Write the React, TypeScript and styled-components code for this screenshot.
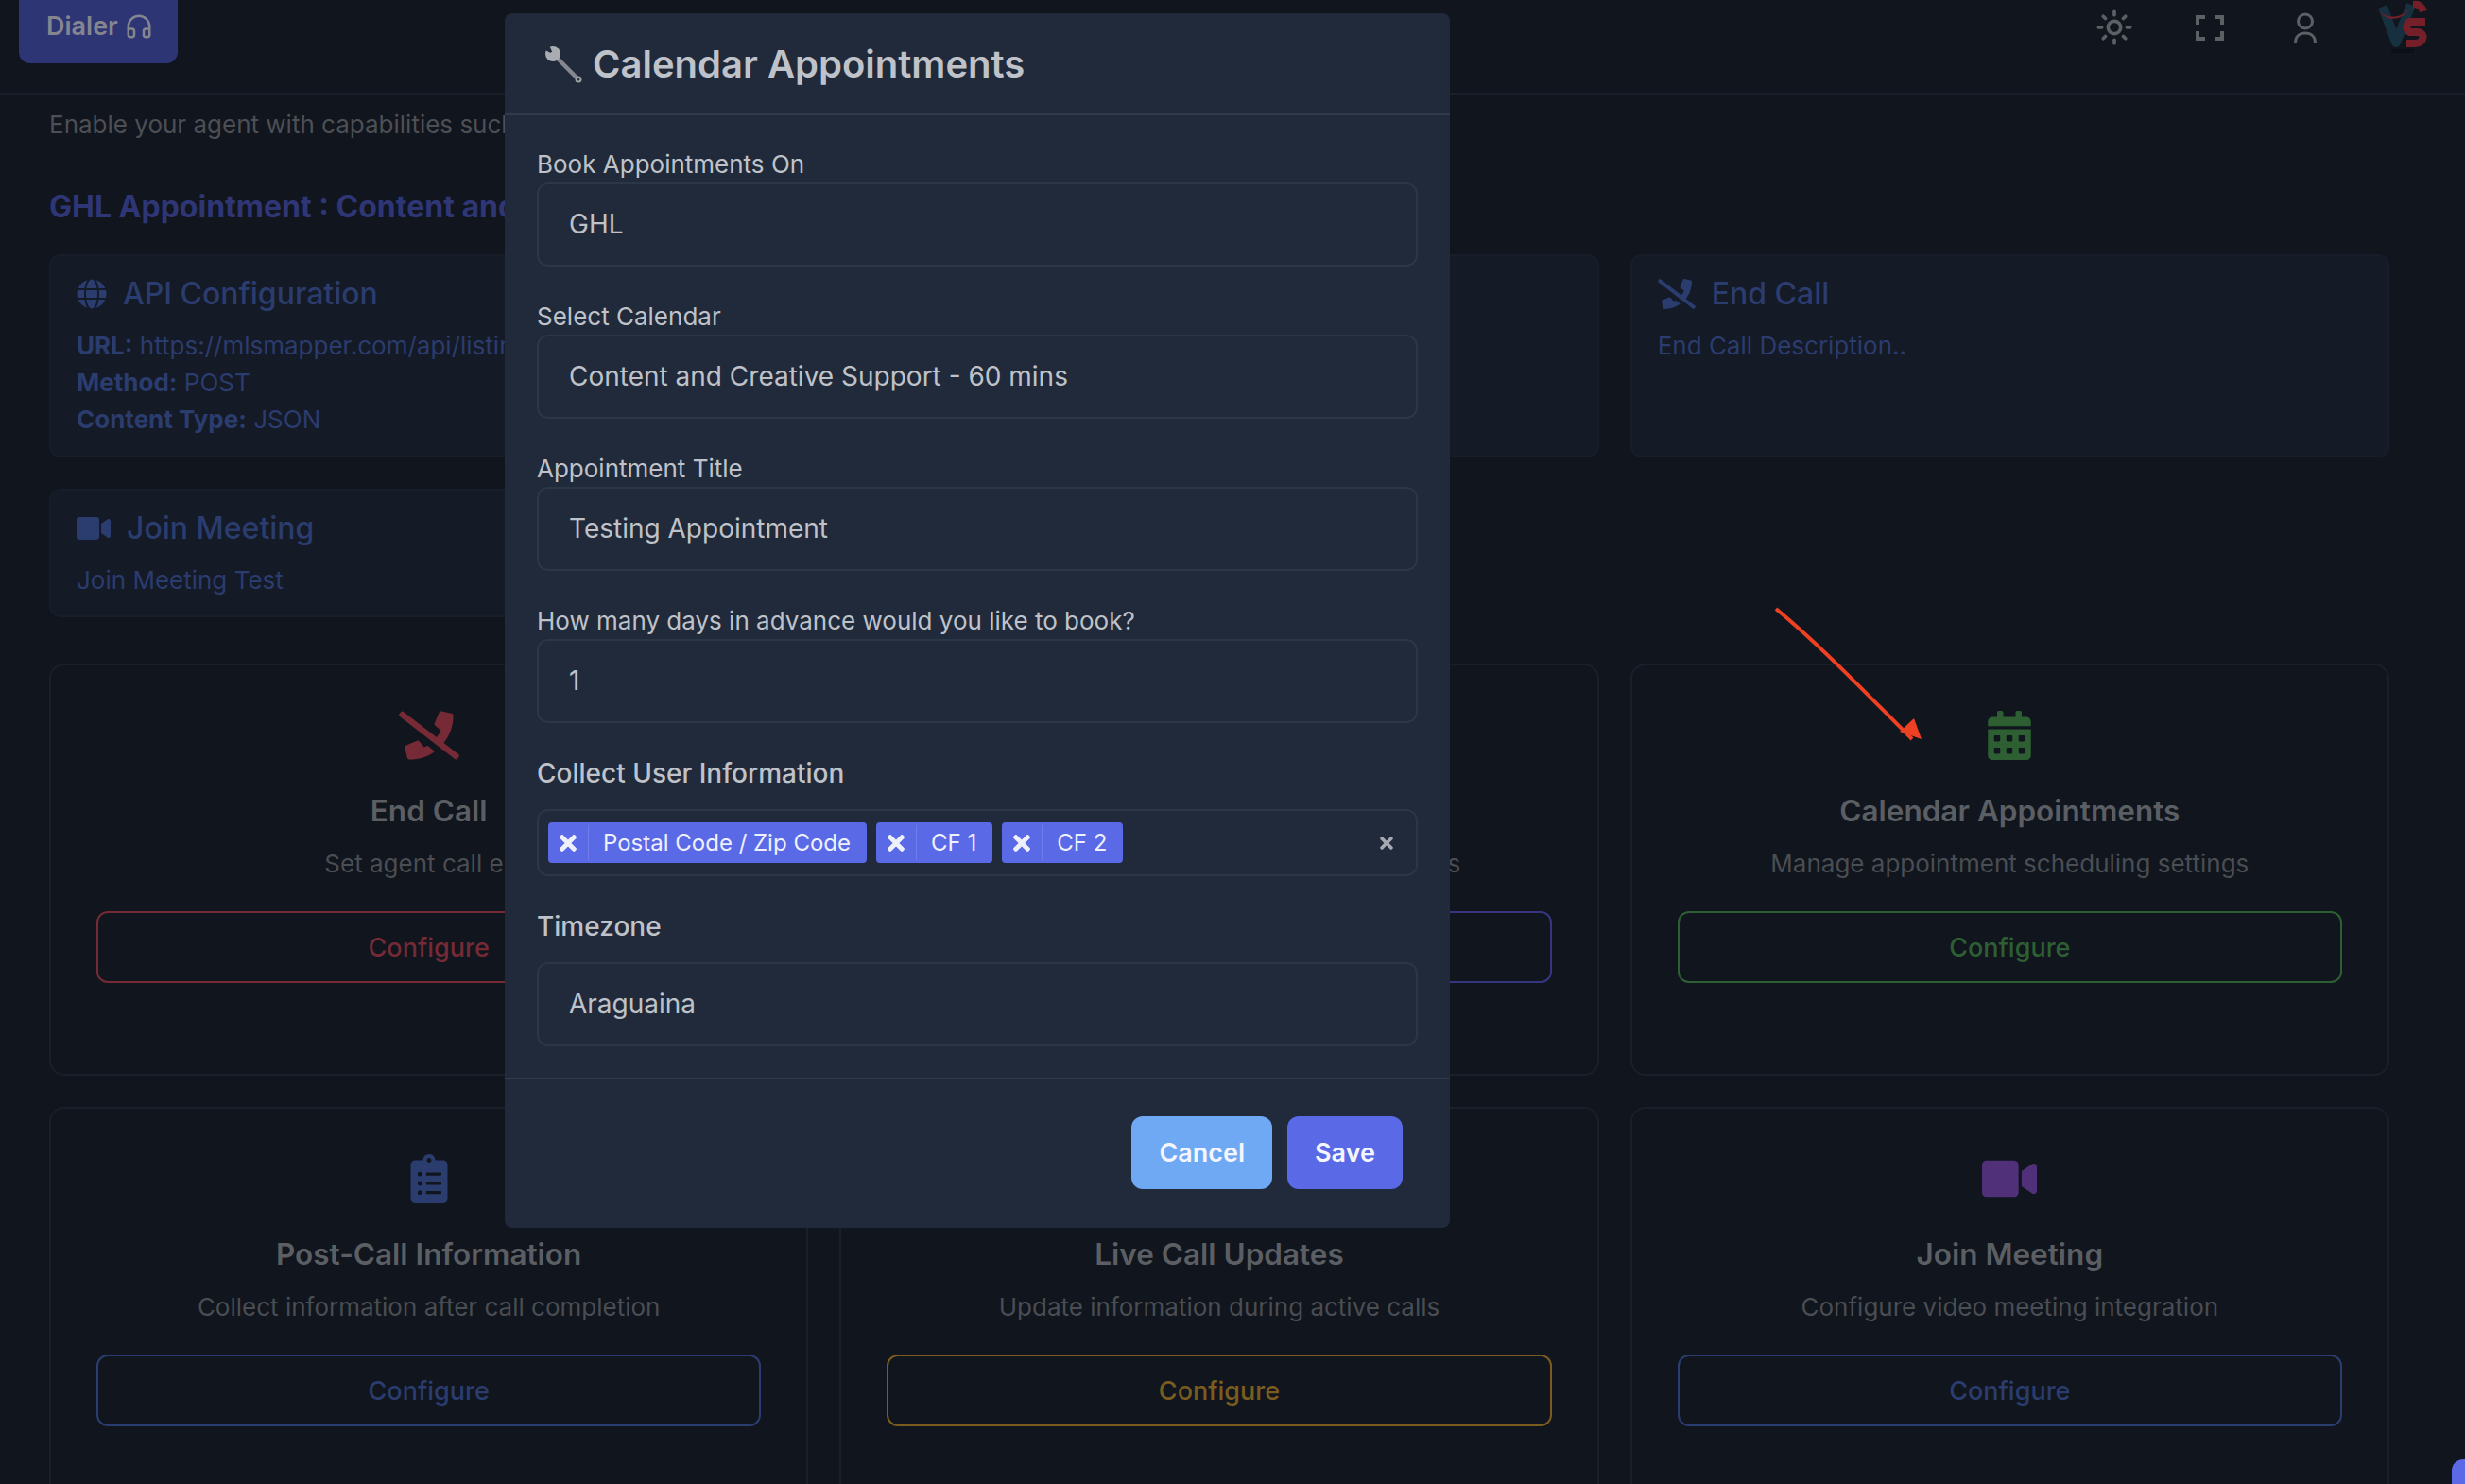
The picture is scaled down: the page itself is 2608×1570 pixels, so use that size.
import React from "react";
import styled, { createGlobalStyle } from "styled-components";
import { Headphones, Sun } from "lucide-react";
import {
  FaCalendarAlt,
  FaClipboardList,
  FaCode,
  FaGlobe,
  FaPhoneSlash,
  FaSyncAlt,
  FaTimes,
  FaVideo,
} from "react-icons/fa";

const GlobalStyle = createGlobalStyle`
  html, body {
    margin: 0;
    height: 100%;
    overflow: hidden;
    background: #10151e;
    font-family: Inter, "Noto Sans", sans-serif;
  }
`;

const tools = [
  {
    key: "end",
    icon: <FaPhoneSlash size={64} />,
    title: "End Call",
    desc: "Set agent call end",
    accent: "#752a35",
  },
  {
    key: "api",
    icon: <FaCode size={64} />,
    title: "API Tools",
    desc: "Configure custom API tools and functions",
    accent: "#35367f",
  },
  {
    key: "calendar",
    icon: <FaCalendarAlt size={52} />,
    title: "Calendar Appointments",
    desc: "Manage appointment scheduling settings",
    accent: "#2e5f33",
  },
  {
    key: "post",
    icon: <FaClipboardList size={52} />,
    title: "Post-Call Information",
    desc: "Collect information after call completion",
    accent: "#2a3d6e",
  },
  {
    key: "live",
    icon: <FaSyncAlt size={52} />,
    title: "Live Call Updates",
    desc: "Update information during active calls",
    accent: "#7a5c1e",
  },
  {
    key: "join",
    icon: <FaVideo size={58} />,
    title: "Join Meeting",
    desc: "Configure video meeting integration",
    accent: "#2a3d6e",
    iconColor: "#4f3079",
  },
];

const fields = [
  { label: "Book Appointments On", value: "GHL" },
  { label: "Select Calendar", value: "Content and Creative Support - 60 mins" },
  { label: "Appointment Title", value: "Testing Appointment" },
  { label: "How many days in advance would you like to book?", value: "1" },
];

const chips = ["Postal Code / Zip Code", "CF 1", "CF 2"];

function WrenchIcon() {
  return (
    <svg width="40" height="40" viewBox="0 0 40 40">
      <line x1="12" y1="12" x2="35" y2="35" stroke="#85888e" strokeWidth="4.5" />
      <circle cx="9" cy="9" r="8" fill="#a9acb1" />
      <path d="M9.500 9.500 L1 5 L1 0 L5 0 Z" fill="#202a3a" />
      <circle cx="9" cy="9" r="2.600" fill="#a9acb1" />
      <circle cx="36" cy="36" r="3.500" fill="#a0a3a8" />
      <circle cx="36" cy="36" r="1.500" fill="#2e3542" />
    </svg>
  );
}

function FullscreenIcon() {
  return (
    <svg width="30" height="27" viewBox="0 0 30 27" fill="none" stroke="#5c5f64" strokeWidth="4">
      <path d="M2 10V2h8M20 2h8v8M28 17v8h-8M10 25H2v-8" />
    </svg>
  );
}

function UserIcon() {
  return (
    <svg width="24" height="32" viewBox="0 0 24 32" fill="none" stroke="#5c5f64" strokeWidth="3">
      <circle cx="12" cy="9.5" r="7.5" />
      <path d="M1.500 32c0-6.500 4.500-10 10.500-10s10.500 3.500 10.500 10" />
    </svg>
  );
}

function BrandLogo() {
  return (
    <svg width="54" height="56" viewBox="0 0 54 56">
      <path d="M6 6 L20 44 L36 4" fill="none" stroke="#17303f" strokeWidth="10" strokeLinejoin="round" />
      <path d="M0 9 C8 18 22 20 34 9 C26 20 12 24 0 9 Z" fill="#751f29" />
      <path
        d="M38 3 C44 3 48 7 49 11 M51 22 L36 22 C30 22 30 33 36 33 L42 33 C52 33 50 45 40 45 L31 45"
        fill="none"
        stroke="#751f29"
        strokeWidth="8"
      />
      <text x="27" y="55" textAnchor="middle" fontSize="5" fontWeight="700" fill="#07090d">
        VSDSOFT
      </text>
    </svg>
  );
}

export default function App() {
  return (
    <>
      <GlobalStyle />
      <Page>
        <TopBar>
          <DialerButton>
            Dialer <Headphones size={30} strokeWidth={2} />
          </DialerButton>
          <TopActions>
            <IconSlot>
              <Sun size={40} strokeWidth={2.2} color="#5c5f64" />
            </IconSlot>
            <IconSlot>
              <FullscreenIcon />
            </IconSlot>
            <IconSlot>
              <UserIcon />
            </IconSlot>
            <LogoSlot>
              <BrandLogo />
            </LogoSlot>
          </TopActions>
        </TopBar>

        <Content>
          <Intro>Enable your agent with capabilities such as calendar bookings, call transfers and more.</Intro>
          <SectionTitle>GHL Appointment : Content and Creative Support - 60 mins</SectionTitle>

          <SummaryGrid>
            <SummaryCard $height={215}>
              <SummaryTitle>
                <FaGlobe size={32} />
                API Configuration
              </SummaryTitle>
              <SummaryLine>
                <b>URL:</b> https://mlsmapper.com/api/listings
              </SummaryLine>
              <SummaryLine>
                <b>Method:</b> POST
              </SummaryLine>
              <SummaryLine>
                <b>Content Type:</b> JSON
              </SummaryLine>
            </SummaryCard>
            <SummaryCard $height={215} />
            <SummaryCard $height={215}>
              <SummaryTitle>
                <FaPhoneSlash size={40} />
                End Call
              </SummaryTitle>
              <SummaryLine>End Call Description..</SummaryLine>
            </SummaryCard>
            <SummaryCard $height={136}>
              <SummaryTitle>
                <FaVideo size={36} />
                Join Meeting
              </SummaryTitle>
              <SummaryLine>Join Meeting Test</SummaryLine>
            </SummaryCard>
          </SummaryGrid>

          <ToolGrid>
            {tools.map((tool) => (
              <ToolCard key={tool.key}>
                <ToolIcon $color={tool.iconColor || tool.accent}>{tool.icon}</ToolIcon>
                <ToolTitle>{tool.title}</ToolTitle>
                <ToolDesc>{tool.desc}</ToolDesc>
                <ConfigureButton $accent={tool.accent}>Configure</ConfigureButton>
              </ToolCard>
            ))}
          </ToolGrid>
        </Content>
      </Page>

      <Modal>
        <ModalHeader>
          <WrenchIcon />
          <ModalTitle>Calendar Appointments</ModalTitle>
        </ModalHeader>
        <ModalBody>
          {fields.map((field) => (
            <Field key={field.label}>
              <FieldLabel>{field.label}</FieldLabel>
              <TextInput readOnly value={field.value} />
            </Field>
          ))}
          <Field>
            <StrongLabel>Collect User Information</StrongLabel>
            <MultiSelect>
              {chips.map((chip) => (
                <Chip key={chip}>
                  <ChipRemove>
                    <FaTimes />
                  </ChipRemove>
                  <ChipText>{chip}</ChipText>
                </Chip>
              ))}
              <ClearAll>
                <FaTimes />
              </ClearAll>
            </MultiSelect>
          </Field>
          <Field>
            <StrongLabel>Timezone</StrongLabel>
            <TextInput readOnly value="Araguaina" />
          </Field>
        </ModalBody>
        <ModalFooter>
          <FooterButton $bg="#6fa8f3">Cancel</FooterButton>
          <FooterButton $bg="#5a69e6">Save</FooterButton>
        </ModalFooter>
      </Modal>

      <AnnotationArrow viewBox="0 0 170 150" width="170" height="150">
        <path d="M2 2 C48 40 94 88 146 140" fill="none" stroke="#ee4023" strokeWidth="4" />
        <polygon points="156,140 133,132 148,118" fill="#ee4023" />
      </AnnotationArrow>

      <CornerTab />
    </>
  );
}

const Page = styled.div`
  height: 1570px;
  overflow: hidden;
  background: #10151e;
`;

const TopBar = styled.header`
  display: flex;
  justify-content: space-between;
  align-items: flex-start;
  box-sizing: border-box;
  height: 100px;
  padding-left: 20px;
  border-bottom: 2px solid #1a202b;
`;

const DialerButton = styled.button`
  display: flex;
  align-items: center;
  gap: 7px;
  box-sizing: border-box;
  width: 168px;
  height: 67px;
  padding: 0 0 12px 29px;
  border: 0;
  border-radius: 0 0 12px 12px;
  background: #2e3575;
  color: #84868f;
  font: 600 27px Inter, sans-serif;
`;

const TopActions = styled.div`
  display: flex;
  align-items: center;
  margin-right: 39px;
  padding-top: 1px;
`;

const IconSlot = styled.div`
  display: flex;
  justify-content: center;
  width: 101px;
`;

const LogoSlot = styled.div`
  display: flex;
  margin-left: 26px;
`;

const Content = styled.main`
  padding: 0 80px 0 52px;
`;

const Intro = styled.p`
  margin: 13px 0 0;
  color: #4d4f54;
  font-size: 26px;
  line-height: 38px;
`;

const SectionTitle = styled.h2`
  margin: 46px 0 28px;
  color: #2f3676;
  font-size: 32px;
  font-weight: 700;
  line-height: 44px;
`;

const SummaryGrid = styled.div`
  display: grid;
  grid-template-columns: repeat(3, 1fr);
  align-items: start;
  gap: 33px;
`;

const SummaryCard = styled.section<{ $height: number }>`
  box-sizing: border-box;
  height: ${(p) => p.$height}px;
  padding: 20px 27px;
  border: 2px solid #171d29;
  border-radius: 12px;
  background: #141a26;
  color: #2b3c6e;
  overflow: hidden;
`;

const SummaryTitle = styled.h4`
  display: flex;
  align-items: center;
  gap: 17px;
  height: 40px;
  margin: 0 0 15px;
  font-size: 32px;
  font-weight: 500;
  line-height: 40px;
`;

const SummaryLine = styled.div`
  font-size: 26px;
  line-height: 39px;
  white-space: nowrap;

  b {
    font-weight: 700;
  }
`;

const ToolGrid = styled.div`
  display: grid;
  grid-template-columns: repeat(3, 1fr);
  gap: 33px;
  margin-top: 49px;
`;

const ToolCard = styled.article`
  display: flex;
  flex-direction: column;
  align-items: center;
  box-sizing: border-box;
  height: 436px;
  padding: 48px 48px 0;
  border: 2px solid #1a202b;
  border-radius: 16px;
`;

const ToolIcon = styled.div<{ $color: string }>`
  display: flex;
  align-items: center;
  justify-content: center;
  height: 52px;
  color: ${(p) => p.$color};
`;

const ToolTitle = styled.h3`
  margin: 34px 0 0;
  color: #5b5e63;
  font-size: 31.5px;
  font-weight: 600;
  line-height: 40px;
`;

const ToolDesc = styled.p`
  margin: 16px 0 30px;
  color: #4a4d52;
  font-size: 26px;
  line-height: 40px;
  white-space: nowrap;
`;

const ConfigureButton = styled.button<{ $accent: string }>`
  width: 100%;
  height: 76px;
  flex: none;
  border: 2px solid ${(p) => p.$accent};
  border-radius: 12px;
  background: transparent;
  color: ${(p) => p.$accent};
  font: 500 27px Inter, sans-serif;
`;

const Modal = styled.div`
  position: fixed;
  top: 14px;
  left: 534px;
  box-sizing: border-box;
  width: 1000px;
  height: 1285px;
  border-radius: 8px;
  background: #202a3a;
`;

const ModalHeader = styled.div`
  display: flex;
  align-items: center;
  gap: 11px;
  box-sizing: border-box;
  height: 108px;
  padding: 2px 0 0 42px;
  border-bottom: 2px solid #2f3a4b;
`;

const ModalTitle = styled.h2`
  margin: 0;
  color: #bfc2c9;
  font-size: 40px;
  font-weight: 600;
  line-height: 48px;
`;

const ModalBody = styled.div`
  padding: 33px 34px 0;
`;

const Field = styled.div`
  margin-bottom: 34px;

  &:last-child {
    margin-bottom: 33px;
  }
`;

const FieldLabel = styled.label`
  display: block;
  color: #bfc2c9;
  font-size: 26px;
  line-height: 38px;
`;

const StrongLabel = styled(FieldLabel)`
  margin-bottom: 19px;
  font-size: 28px;
  font-weight: 500;
`;

const TextInput = styled.input`
  display: block;
  box-sizing: border-box;
  width: 100%;
  height: 89px;
  padding: 0 32px 2px;
  border: 2px solid #2b3647;
  border-radius: 12px;
  outline: 0;
  background: transparent;
  color: #bfc2c9;
  font: 400 28px Inter, sans-serif;
`;

const MultiSelect = styled.div`
  display: flex;
  align-items: center;
  gap: 10px;
  box-sizing: border-box;
  height: 71px;
  padding: 0 21px 0 10px;
  border: 2px solid #2b3647;
  border-radius: 12px;
`;

const Chip = styled.div`
  display: flex;
  align-items: stretch;
  height: 43px;
  border-radius: 4px;
  background: #5a69e6;
  color: #eef0fc;
`;

const ChipRemove = styled.span`
  display: flex;
  align-items: center;
  justify-content: center;
  box-sizing: border-box;
  width: 43px;
  margin: 3px 0;
  border-right: 1px solid #6f7cea;
  font-size: 26px;
`;

const ChipText = styled.span`
  display: flex;
  align-items: center;
  padding: 0 17px 0 15px;
  font-size: 24px;
`;

const ClearAll = styled.span`
  display: flex;
  margin-left: auto;
  color: #a5a9b1;
  font-size: 20px;
`;

const ModalFooter = styled.div`
  display: flex;
  justify-content: flex-end;
  gap: 16px;
  box-sizing: border-box;
  padding: 39px 50px 39px 49px;
  border-top: 2px solid #2f3a4b;
`;

const FooterButton = styled.button<{ $bg: string }>`
  height: 77px;
  padding: 0 29px;
  border: 0;
  border-radius: 12px;
  background: ${(p) => p.$bg};
  color: #f4f6fe;
  font: 600 27px Inter, sans-serif;
`;

const AnnotationArrow = styled.svg`
  position: fixed;
  top: 642px;
  left: 1877px;
`;

const CornerTab = styled.div`
  position: fixed;
  right: 0;
  bottom: 0;
  width: 14px;
  height: 26px;
  border-radius: 12px 0 0 0;
  background: #5a69e6;
`;
